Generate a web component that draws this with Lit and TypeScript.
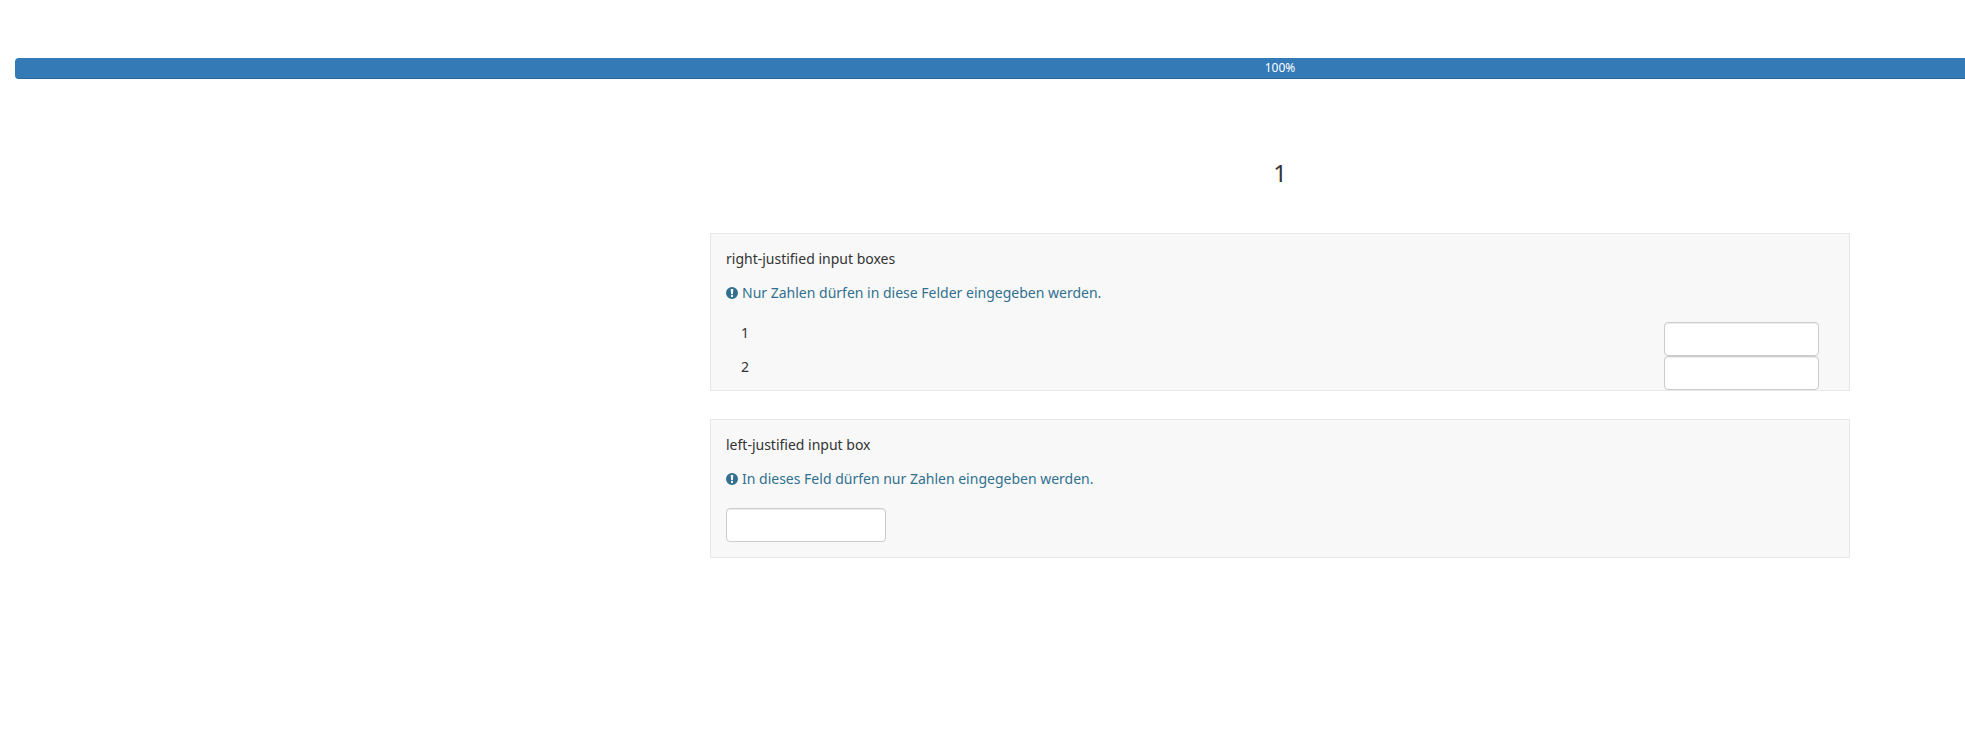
import { LitElement, html, css } from "lit";
import { customElement } from "lit/decorators.js";

const icon = html`<svg class="ico" viewBox="0 0 12 12" aria-hidden="true"><path fill-rule="evenodd" fill="currentColor" d="M6 0a6 6 0 1 1 0 12A6 6 0 0 1 6 0ZM4.7 2.1l.4 5.2h1.8l.4-5.2ZM5 8.1v1.8h2V8.1Z"/></svg>`;

@customElement("app-root")
export class AppRoot extends LitElement {
  static styles = css`
    :host {
      display: block;
      overflow: hidden;
      height: 742px;
      font-family: "Noto Sans", sans-serif;
      font-size: 14px;
      line-height: 20px;
      color: #333;
      background: #fff;
    }
    .page {
      width: 2560px;
      box-sizing: border-box;
      padding: 58px 15px 0;
    }
    .bar {
      height: 21px;
      background: #337ab7;
      border-radius: 4px;
      box-shadow: inset 0 -1px 0 rgba(0, 0, 0, 0.15);
      color: #fff;
      font-size: 12px;
      line-height: 20px;
      text-align: center;
    }
    .heading {
      margin: 77px 0 0;
      font-size: 24px;
      font-weight: 400;
      line-height: 33px;
      text-align: center;
      color: #333;
    }
    .column {
      width: 1140px;
      margin: 44px auto 0;
      display: flex;
      flex-direction: column;
      gap: 28px;
    }
    .well {
      box-sizing: border-box;
      background: #f8f8f8;
      border: 1px solid #e7e7e7;
      padding: 15px 15px 0;
    }
    .well.pad {
      padding-bottom: 15px;
    }
    .title {
      margin: 0;
      height: 20px;
    }
    .note {
      margin: 14px 0 0;
      height: 20px;
      color: #31708f;
      display: flex;
      align-items: center;
      gap: 4px;
    }
    .ico {
      width: 12px;
      height: 12px;
      flex: none;
    }
    .rows {
      margin-top: 19px;
    }
    .row {
      height: 34px;
      display: flex;
      justify-content: space-between;
      padding: 0 15px;
    }
    .row span {
      line-height: 20px;
      padding-top: 1px;
    }
    input {
      display: block;
      box-sizing: border-box;
      height: 34px;
      margin: 0;
      padding: 6px 12px;
      background: #fff;
      border: 1px solid #ccc;
      border-radius: 4px;
      box-shadow: inset 0 1px 1px rgba(0, 0, 0, 0.075);
      outline: none;
    }
    .row input {
      width: 155px;
    }
    .left {
      width: 160px;
      margin-top: 19px;
    }
  `;

  render() {
    return html`
      <div class="page">
        <div class="bar">100%</div>
        <h3 class="heading">1</h3>
        <div class="column">
          <section class="well">
            <p class="title">right-justified input boxes</p>
            <p class="note">${icon}<span>Nur Zahlen dürfen in diese Felder eingegeben werden.</span></p>
            <div class="rows">
              <div class="row"><span>1</span><input type="text" /></div>
              <div class="row"><span>2</span><input type="text" /></div>
            </div>
          </section>
          <section class="well pad">
            <p class="title">left-justified input box</p>
            <p class="note">${icon}<span>In dieses Feld dürfen nur Zahlen eingegeben werden.</span></p>
            <input class="left" type="text" />
          </section>
        </div>
      </div>
    `;
  }
}
